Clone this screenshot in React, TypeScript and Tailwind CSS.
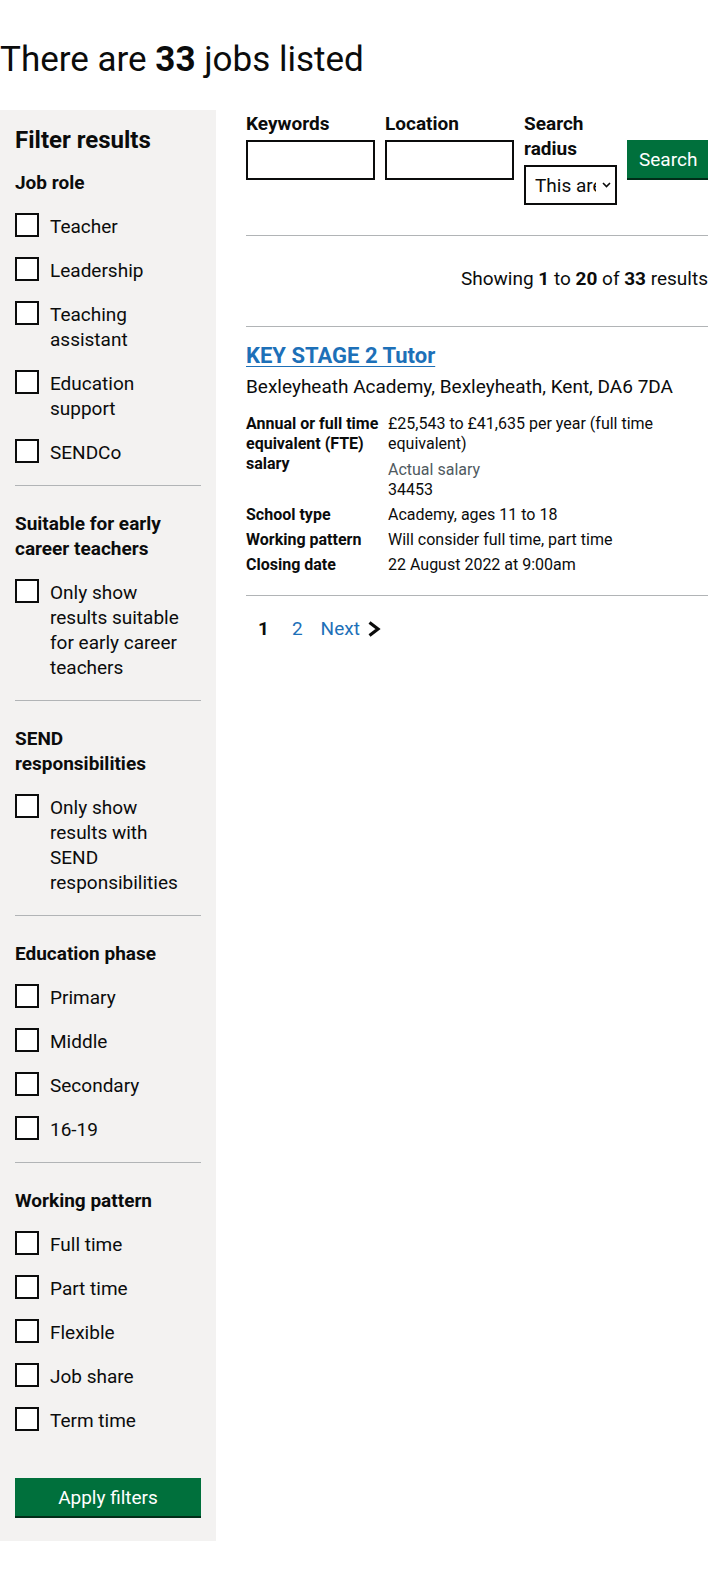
import React from "react";

const groups: { title: string; items: string[] }[] = [
  { title: "Job role", items: ["Teacher", "Leadership", "Teaching assistant", "Education support", "SENDCo"] },
  { title: "Suitable for early career teachers", items: ["Only show results suitable for early career teachers"] },
  { title: "SEND responsibilities", items: ["Only show results with SEND responsibilities"] },
  { title: "Education phase", items: ["Primary", "Middle", "Secondary", "16-19"] },
  { title: "Working pattern", items: ["Full time", "Part time", "Flexible", "Job share", "Term time"] },
];

function CheckItem({ label }: { label: string }) {
  return (
    <div className="flex items-start">
      <div className="w-6 h-6 shrink-0 border-2 border-[#0b0c0c] bg-white" />
      <span className="ml-[11px] mt-px w-[135px] text-[19px] leading-[25px]">{label}</span>
    </div>
  );
}

function Sidebar() {
  return (
    <aside className="w-[216px] shrink-0 bg-[#f3f2f1] px-[15px] pt-[15px] pb-[25px]">
      <h2 className="text-[24px] leading-[30px] font-bold mb-[15px]">Filter results</h2>
      {groups.map((g, i) => (
        <div key={g.title}>
          {i > 0 && <div className="mt-5 h-px bg-[#b1b4b6]" />}
          <h3 className={`pr-[15px] text-[19px] leading-[25px] font-bold mb-[18px] ${i > 0 ? "mt-[25px]" : ""}`}>{g.title}</h3>
          <div className="flex flex-col gap-[18px]">
            {g.items.map((it) => (
              <CheckItem key={it} label={it} />
            ))}
          </div>
        </div>
      ))}
      <button className="mt-[45px] w-full h-[38px] bg-[#00703c] text-white text-[19px] leading-[25px] shadow-[0_2px_0_#002d18] flex items-center justify-center">
        Apply filters
      </button>
    </aside>
  );
}

function SearchForm() {
  return (
    <div className="flex items-start gap-[10px] pt-px">
      <div className="w-[129px] shrink-0">
        <label className="block text-[19px] leading-[25px] font-bold mb-1">Keywords</label>
        <div className="h-10 border-2 border-[#0b0c0c] bg-white" />
      </div>
      <div className="w-[129px] shrink-0">
        <label className="block text-[19px] leading-[25px] font-bold mb-1">Location</label>
        <div className="h-10 border-2 border-[#0b0c0c] bg-white" />
      </div>
      <div className="w-[93px] shrink-0">
        <label className="block text-[19px] leading-[25px] font-bold mb-1">Search radius</label>
        <div className="h-10 border-2 border-[#0b0c0c] bg-white flex items-center pl-[9px] pr-[4px]">
          <span className="w-[61px] overflow-hidden whitespace-nowrap text-[19px] leading-[25px]">This area only</span>
          <svg className="ml-[6px] shrink-0" width="9" height="6" viewBox="0 0 9 6" fill="none">
            <polyline points="1,1 4.5,4.5 8,1" stroke="#0b0c0c" strokeWidth="1.6" />
          </svg>
        </div>
      </div>
      <button className="mt-[29px] shrink-0 h-[38px] px-3 bg-[#00703c] text-white text-[19px] leading-[25px] whitespace-nowrap shadow-[0_2px_0_#002d18]">
        Search
      </button>
    </div>
  );
}

function Row({ k, children }: { k: React.ReactNode; children: React.ReactNode }) {
  return (
    <div className="flex items-start text-[16px] leading-[20px]">
      <div className="w-[142px] shrink-0 pr-[6px] font-bold">{k}</div>
      <div className="flex-1 min-w-0">{children}</div>
    </div>
  );
}

function Results() {
  return (
    <main className="ml-[30px] flex-1 min-w-0">
      <SearchForm />
      <div className="mt-[30px] h-px bg-[#b1b4b6]" />
      <p className="mt-[30px] text-right text-[19px] leading-[25px] whitespace-nowrap">
        Showing <b>1</b> to <b>20</b> of <b>33</b> results
      </p>
      <div className="mt-[35px] h-px bg-[#b1b4b6]" />
      <h2 className="mt-[16px] text-[22px] leading-[25px] font-bold">
        <a href="#" className="text-[#1d70b8] underline decoration-1 underline-offset-[3px]">
          KEY STAGE 2 Tutor
        </a>
      </h2>
      <p className="mt-[6px] text-[19px] leading-[25px]">Bexleyheath Academy, Bexleyheath, Kent, DA6 7DA</p>
      <div className="mt-[15px] flex flex-col gap-[5px]">
        <Row k="Annual or full time equivalent (FTE) salary">
          <div>£25,543 to £41,635 per year (full time equivalent)</div>
          <div className="mt-[6px] text-[#505a5f]">Actual salary</div>
          <div>34453</div>
        </Row>
        <Row k="School type">Academy, ages 11 to 18</Row>
        <Row k="Working pattern">Will consider full time, part time</Row>
        <Row k="Closing date">22 August 2022 at 9:00am</Row>
      </div>
      <div className="mt-5 h-px bg-[#b1b4b6]" />
      <nav className="mt-5 flex items-center text-[19px] leading-[25px]">
        <span className="ml-[12px] font-bold">1</span>
        <a href="#" className="ml-[23px] text-[#1d70b8]">2</a>
        <a href="#" className="ml-[18px] text-[#1d70b8]">Next</a>
        <svg className="ml-[7px]" width="14" height="16" viewBox="0 0 14 16" fill="none">
          <polyline points="2.5,1.5 11,8 2.5,14.5" stroke="#0b0c0c" strokeWidth="3.2" />
        </svg>
      </nav>
    </main>
  );
}

export default function App() {
  return (
    <div className="w-[708px] min-h-[1596px] overflow-hidden bg-white text-[#0b0c0c] [font-family:Roboto,Arial,sans-serif] pt-10">
      <h1 className="text-[35px] leading-[40px] mb-[30px] whitespace-nowrap">
        There are <b>33</b> jobs listed
      </h1>
      <div className="flex items-start">
        <Sidebar />
        <Results />
      </div>
    </div>
  );
}
